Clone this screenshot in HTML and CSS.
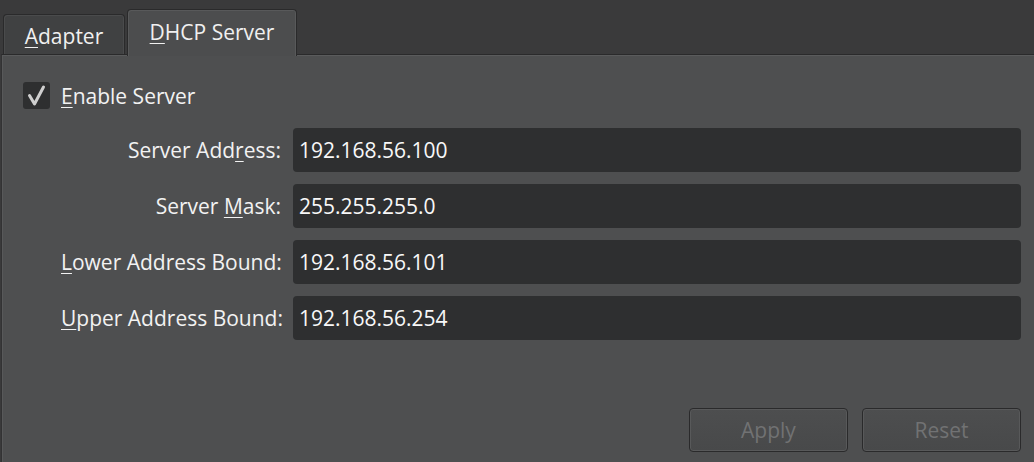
FILE: index.html
```html
<!DOCTYPE html>
<html>
<head>
<meta charset="utf-8">
<link rel="stylesheet" href="styles.css">
</head>
<body>
<div class="window">
  <div class="tabbar">
    <div class="tab"><span><u>A</u>dapter</span></div>
    <div class="tab active"><span><u>D</u>HCP Server</span></div>
  </div>
  <div class="panel">
    <div class="check-row">
      <span class="checkbox">
        <svg width="27" height="27" viewBox="0 0 27 27"><path d="M6.5 13.5 L11.5 22 L20.5 5" fill="none" stroke="#cfcfcf" stroke-width="3" stroke-linecap="round" stroke-linejoin="round"/></svg>
      </span>
      <span class="check-label"><u>E</u>nable Server</span>
    </div>
    <div class="form">
      <label class="lbl">Server Add<u>r</u>ess:</label>
      <div class="field">192.168.56.100</div>
      <label class="lbl">Server <u>M</u>ask:</label>
      <div class="field">255.255.255.0</div>
      <label class="lbl"><u>L</u>ower Address Bound:</label>
      <div class="field">192.168.56.101</div>
      <label class="lbl"><u>U</u>pper Address Bound:</label>
      <div class="field">192.168.56.254</div>
    </div>
    <div class="buttons">
      <div class="btn">Apply</div>
      <div class="btn">Reset</div>
    </div>
  </div>
</div>
</body>
</html>
```
FILE: styles.css
```css
* {
  box-sizing: border-box;
}
html, body {
  margin: 0;
  padding: 0;
  background: #3a3a3b;
  width: 1034px;
  height: 462px;
  overflow: hidden;
  font-family: "Open Sans", "Noto Sans", sans-serif;
  color: #f2f2f2;
}
u {
  text-decoration: underline;
  text-decoration-thickness: 1px;
  text-underline-offset: 3px;
}
.window {
  display: flex;
  flex-direction: column;
  height: 462px;
}
.tabbar {
  height: 54px;
  display: flex;
  align-items: flex-end;
  padding-left: 3px;
  position: relative;
  z-index: 2;
}
.tab {
  width: 122px;
  height: 40px;
  margin-right: 2px;
  background: #404142;
  border: 1px solid #2a2a2b;
  border-bottom: none;
  border-radius: 4px 4px 0 0;
  box-shadow: inset 1px 1px 0 #4a4b4c, inset -1px 0 0 #4a4b4c;
  display: flex;
  justify-content: center;
  align-items: center;
  font-size: 21px;
  color: #f0f0f0;
  padding-top: 2px;
}
.tab.active {
  width: 170px;
  height: 47px;
  margin-bottom: -2px;
  background: #4c4d4e;
  border-color: #2a2a2b;
  box-shadow: inset 1px 1px 0 #58595a, inset -1px 0 0 #58595a;
  padding-top: 0;
  padding-bottom: 3px;
}
.panel {
  flex: 1;
  background: #4e4f50;
  border-top: 1px solid #2a2a2b;
  border-left: 1px solid #333334;
  margin-left: 1px;
  box-shadow: inset 0 1px 0 #5a5b5c, inset 1px 0 0 #58595a;
  padding: 27px 13px 0 21px;
  display: flex;
  flex-direction: column;
}
.check-row {
  display: flex;
  align-items: center;
  height: 27px;
  gap: 11px;
}
.checkbox {
  width: 27px;
  height: 27px;
  border-radius: 3px;
  background: #2e2f30;
  display: block;
}
.checkbox svg {
  display: block;
}
.check-label {
  font-size: 21px;
  color: #f2f2f2;
}
.form {
  margin-top: 19px;
  margin-left: 38px;
  display: grid;
  grid-template-columns: 220px 1fr;
  column-gap: 12px;
  row-gap: 12px;
}
.lbl {
  font-size: 21px;
  text-align: right;
  align-self: center;
  color: #f2f2f2;
  white-space: nowrap;
}
.field {
  height: 44px;
  background: #2e2f30;
  border-radius: 4px;
  font-size: 21px;
  display: flex;
  align-items: center;
  padding-left: 6px;
  color: #f8f8f8;
}
.buttons {
  margin-top: 68px;
  display: flex;
  justify-content: flex-end;
  gap: 14px;
}
.btn {
  width: 159px;
  height: 44px;
  border: 1px solid #2a2a2b;
  border-radius: 4px;
  box-shadow: inset 0 0 0 1px #58595a;
  background: linear-gradient(#4d4e4f, #48494a);
  color: #717273;
  font-size: 21px;
  display: flex;
  align-items: center;
  justify-content: center;
}
```
